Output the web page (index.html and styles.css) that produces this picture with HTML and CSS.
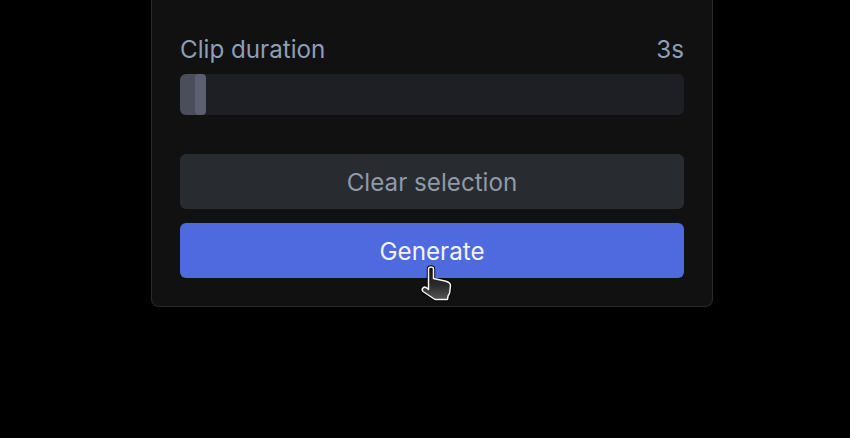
FILE: index.html
```html
<!DOCTYPE html>
<html lang="en">
<head>
  <meta charset="UTF-8" />
  <meta name="viewport" content="width=device-width, initial-scale=1.0"/>
  <title>Clip settings</title>
  <link rel="stylesheet" href="styles.css">
</head>
<body>

  <div class="panel">
    <div class="field-head">
      <span>Clip duration</span>
      <span>3s</span>
    </div>
    <div class="slider">
      <div class="slider-fill"></div>
      <div class="slider-thumb"></div>
    </div>
    <button class="btn btn-clear">Clear selection</button>
    <button class="btn btn-generate">Generate</button>

    <!-- mouse pointer -->
    <svg class="cursor" width="42" height="42" viewBox="0 0 42 42">
      <defs>
        <linearGradient id="cursorFill" x1="0" y1="0" x2="0" y2="1">
          <stop offset="0" stop-color="#111"/>
          <stop offset="0.55" stop-color="#2a2a2a"/>
          <stop offset="1" stop-color="#555"/>
        </linearGradient>
      </defs>
      <path d="M13.500 7c0-2.700 5-2.700 5 0v9.500l11.500 2.500c3.500.8 5.500 2.200 5.500 4.500l-.8 7c-.2 1.500-1 2.500-1.700 3.500l-.5 3.500H20L8 29.500c-2.200-2.300.8-5.500 3.300-3.800l2.200 1.800z" fill="url(#cursorFill)" stroke="#000" stroke-width="3.400" stroke-linejoin="round"/>
      <path d="M13.500 7c0-2.700 5-2.700 5 0v9.500l11.500 2.500c3.500.8 5.500 2.200 5.500 4.500l-.8 7c-.2 1.500-1 2.500-1.700 3.500l-.5 3.500H20L8 29.500c-2.200-2.300.8-5.500 3.300-3.800l2.200 1.800z" fill="url(#cursorFill)" stroke="#f4f4f4" stroke-width="1.500" stroke-linejoin="round"/>
    </svg>
  </div>

</body>
</html>
```

FILE: styles.css
```css
html, body {
  margin: 0;
  height: 438px;
  overflow: hidden;
  background: #000;
}
body {
  font-family: Inter, "Liberation Sans", sans-serif;
}
.panel {
  position: relative;
  box-sizing: border-box;
  width: 562px;
  height: 307px;
  margin-left: 151px;
  padding: 35px 28px 28px;
  background: #111112;
  border: 1px solid #2b2a30;
  border-top: none;
  border-radius: 0 0 8px 8px;
}
.field-head {
  display: flex;
  justify-content: space-between;
  height: 29px;
  line-height: 29px;
  font-size: 24.2px;
  color: #8e9fb5;
}
.slider {
  display: flex;
  height: 41px;
  margin: 10px 0 39px;
  background: #1e1f25;
  border-radius: 6px;
  overflow: hidden;
}
.slider-fill {
  width: 21px;
  background: #4a4d5a;
}
.slider-thumb {
  width: 11px;
  margin-left: -6px;
  background: #5c5f70;
  border-radius: 4px;
}
.btn {
  display: block;
  width: 100%;
  height: 55px;
  padding: 1px 0 0;
  border: none;
  border-radius: 6px;
  font-family: inherit;
  font-size: 24.2px;
}
.btn-clear {
  background: #282b30;
  color: #8f9aa8;
  margin-bottom: 14px;
}
.btn-generate {
  background: #4f69df;
  color: #f2f4ff;
}
.cursor {
  position: absolute;
  left: 263px;
  top: 262px;
}
```
